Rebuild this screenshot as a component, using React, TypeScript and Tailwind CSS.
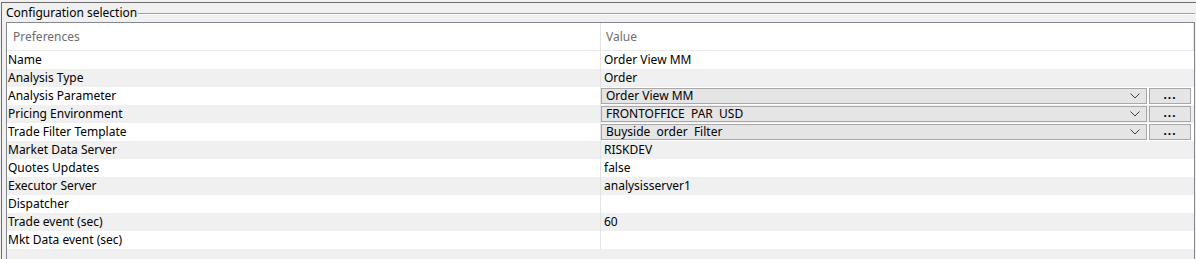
type Row = {
  label: string;
  value?: string;
  combo?: boolean;
};

const rows: Row[] = [
  { label: 'Name', value: 'Order View MM' },
  { label: 'Analysis Type', value: 'Order' },
  { label: 'Analysis Parameter', value: 'Order View MM', combo: true },
  { label: 'Pricing Environment', value: 'FRONTOFFICE  PAR  USD', combo: true },
  { label: 'Trade Filter Template', value: 'Buyside  order  Filter', combo: true },
  { label: 'Market Data Server', value: 'RISKDEV' },
  { label: 'Quotes Updates', value: 'false' },
  { label: 'Executor Server', value: 'analysisserver1' },
  { label: 'Dispatcher' },
  { label: 'Trade event (sec)', value: '60' },
  { label: 'Mkt Data event (sec)' },
];

function ComboCell({ value }: { value: string }) {
  return (
    <div className="flex h-[18px] items-center gap-[2px] py-[1px] pr-[3px]">
      <div className="flex h-full flex-1 items-center border border-[#a8a8a8] bg-[#e5e5e5] pl-[4px] pr-[6px]">
        <span className="flex-1 whitespace-pre">{value}</span>
        <svg width="10" height="6" viewBox="0 0 10 6" className="text-[#404040]">
          <polyline points="0.5,0.5 5,5 9.5,0.5" fill="none" stroke="currentColor" strokeWidth="1" />
        </svg>
      </div>
      <div className="flex h-full w-[42px] items-end justify-center border border-[#a8a8a8] bg-[#e5e5e5] pb-[2px] text-[12px] font-bold leading-none tracking-[1px]">
        ...
      </div>
    </div>
  );
}

export default function App() {
  return (
    <div className="h-[259px] w-[1196px] overflow-hidden bg-[#f0f0f0] pl-[1px] pt-[2px] font-['Segoe_UI','Noto_Sans',sans-serif] text-[12px] text-black">
      <div className="h-full border-l border-t border-[#6d6d6d]">
        <div className="flex h-[19px] items-center pl-[4px] pr-[1px]">
          <span className="leading-none">Configuration selection</span>
          <div className="ml-[1px] mt-[2px] flex-1 border-t border-b border-t-[#a0a0a0] border-b-white" />
        </div>
        <div className="ml-[4px] mr-[1px] border border-[#828790] bg-white">
          <div className="grid h-[28px] grid-cols-[593px_1fr] border-b border-[#e9e9e9] text-[#6d6d6d]">
            <div className="flex items-center pl-[6px]">Preferences</div>
            <div className="flex items-center border-l border-r border-[#e3e3e3] pl-[5px]">Value</div>
          </div>
          {rows.map((r, i) => (
            <div
              key={r.label}
              className={[
                'grid h-[18px] grid-cols-[593px_1fr] items-center',
                i % 2 === 1 ? 'bg-[#f0f0f0]' : 'bg-white',
              ].join(' ')}
            >
              <div className="pl-[1px]">{r.label}</div>
              <div className="h-full border-l border-[#e3e3e3]">
                {r.combo ? (
                  <ComboCell value={r.value ?? ''} />
                ) : (
                  <div className="flex h-full items-center pl-[3px]">{r.value ?? ''}</div>
                )}
              </div>
            </div>
          ))}
          <div className="h-[20px] bg-[#f0f0f0]" />
        </div>
      </div>
    </div>
  );
}
